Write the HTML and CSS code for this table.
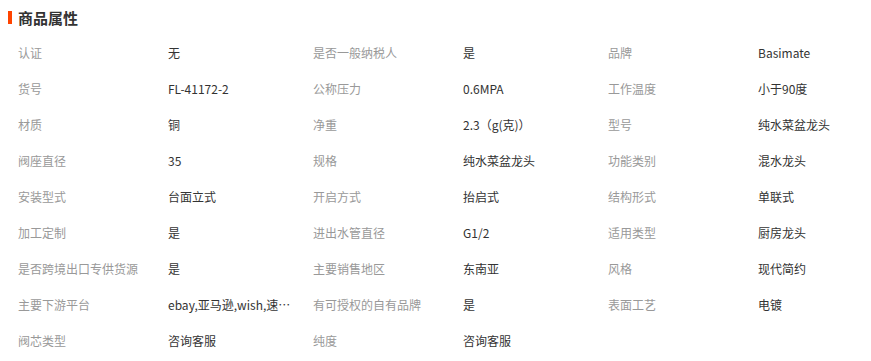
FILE: index.html
```html
<!DOCTYPE html>
<html lang="zh-CN">
<head>
<meta charset="utf-8">
<title>商品属性</title>
<link rel="stylesheet" href="styles.css">
</head>
<body>
<div class="attrs">
  <h2 class="attrs-title">商品属性</h2>
  <div class="attrs-grid">
    <div class="k">认证</div><div class="v">无</div>
    <div class="k">是否一般纳税人</div><div class="v">是</div>
    <div class="k">品牌</div><div class="v">Basimate</div>

    <div class="k">货号</div><div class="v">FL-41172-2</div>
    <div class="k">公称压力</div><div class="v">0.6MPA</div>
    <div class="k">工作温度</div><div class="v">小于90度</div>

    <div class="k">材质</div><div class="v">铜</div>
    <div class="k">净重</div><div class="v">2.3（g(克)）</div>
    <div class="k">型号</div><div class="v">纯水菜盆龙头</div>

    <div class="k">阀座直径</div><div class="v">35</div>
    <div class="k">规格</div><div class="v">纯水菜盆龙头</div>
    <div class="k">功能类别</div><div class="v">混水龙头</div>

    <div class="k">安装型式</div><div class="v">台面立式</div>
    <div class="k">开启方式</div><div class="v">抬启式</div>
    <div class="k">结构形式</div><div class="v">单联式</div>

    <div class="k">加工定制</div><div class="v">是</div>
    <div class="k">进出水管直径</div><div class="v">G1/2</div>
    <div class="k">适用类型</div><div class="v">厨房龙头</div>

    <div class="k">是否跨境出口专供货源</div><div class="v">是</div>
    <div class="k">主要销售地区</div><div class="v">东南亚</div>
    <div class="k">风格</div><div class="v">现代简约</div>

    <div class="k">主要下游平台</div><div class="v v-clip">ebay,亚马逊,wish,速卖通,独立站,LAZADA</div>
    <div class="k">有可授权的自有品牌</div><div class="v">是</div>
    <div class="k">表面工艺</div><div class="v">电镀</div>

    <div class="k">阀芯类型</div><div class="v">咨询客服</div>
    <div class="k">纯度</div><div class="v">咨询客服</div>
  </div>
</div>
</body>
</html>
```

FILE: styles.css
```css
html, body {
  margin: 0;
  padding: 0;
  background: #fff;
}
body {
  font-family: "Noto Sans CJK SC", "Noto Sans", sans-serif;
  font-size: 12px;
  color: #333;
}
.attrs {
  padding: 0 0 0 8px;
}
.attrs-title {
  margin: 0;
  height: 35px;
  display: flex;
  align-items: center;
  font-size: 15px;
  font-weight: bold;
  color: #333;
}
.attrs-title::before {
  content: "";
  display: block;
  width: 4px;
  height: 13px;
  background: #ff4400;
  margin-right: 6px;
}
.attrs-grid {
  display: grid;
  grid-template-columns: 150px 145px 150px 145px 150px 145px;
  grid-auto-rows: 36px;
  margin-left: 10px;
}
.k, .v {
  line-height: 36px;
  white-space: nowrap;
  overflow: hidden;
  text-overflow: ellipsis;
}
.k {
  color: #999;
  padding-right: 10px;
}
.v {
  color: #333;
  padding-right: 15px;
}
```
